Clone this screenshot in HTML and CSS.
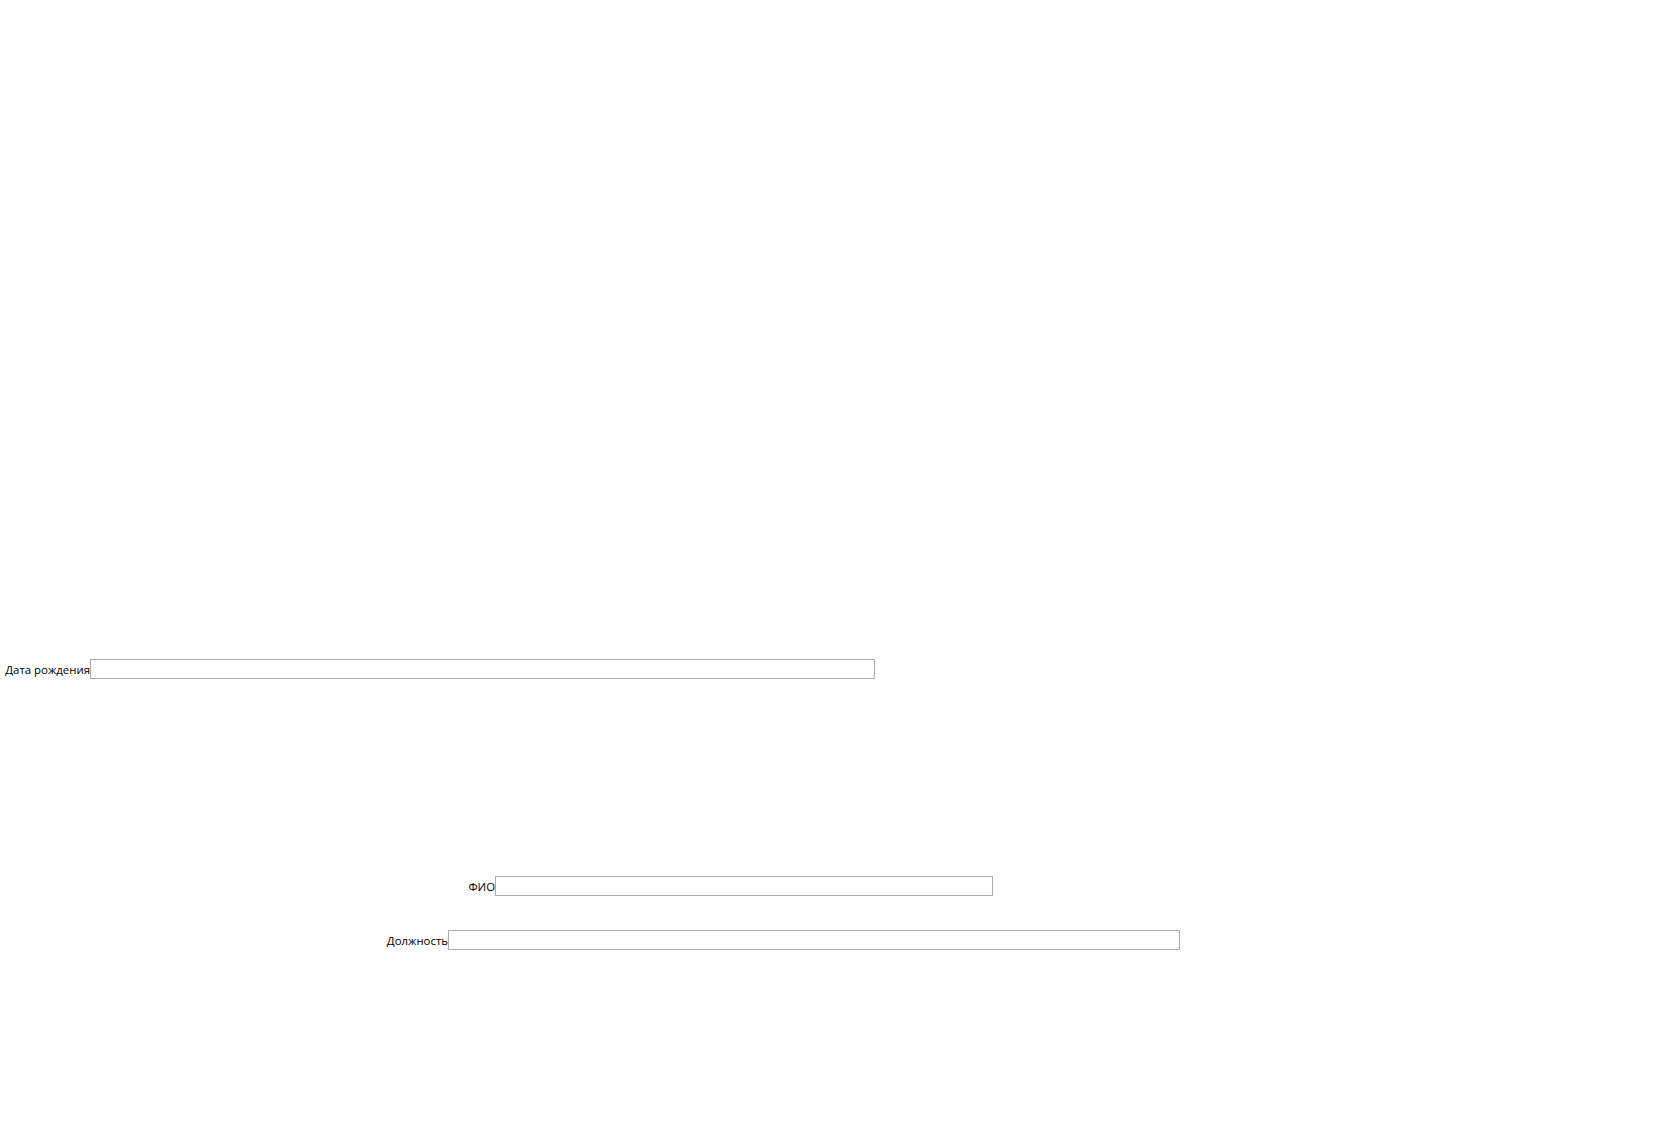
FILE: index.html
```html
<!DOCTYPE html>
<html lang="ru">
<head>
<meta charset="utf-8">
<title>Форма</title>
<link rel="stylesheet" href="styles.css">
</head>
<body>
<div class="form">
  <div class="row row-date">
    <label class="label">Дата рождения</label>
    <input class="field" type="text">
  </div>
  <div class="row row-name">
    <label class="label">ФИО</label>
    <input class="field" type="text">
  </div>
  <div class="row row-post">
    <label class="label">Должность</label>
    <input class="field" type="text">
  </div>
</div>
</body>
</html>
```
FILE: styles.css
```css
html, body {
  margin: 0;
  padding: 0;
  background: #ffffff;
}
body {
  width: 1678px;
  height: 1146px;
  overflow: hidden;
  font-family: "Open Sans", "Noto Sans", "DejaVu Sans", sans-serif;
  font-size: 11.4px;
  color: #000000;
}
.form {
  display: flex;
  flex-direction: column;
  padding-top: 659px;
}
.row {
  display: flex;
  align-items: center;
  height: 20px;
}
.label {
  text-align: right;
  white-space: nowrap;
  line-height: 20px;
  padding-top: 2px;
}
.field {
  box-sizing: border-box;
  height: 20px;
  margin: 0;
  padding: 0 2px;
  border: 1px solid #ababab;
  background: #ffffff;
  outline: none;
  font: inherit;
}
.row-date .label { width: 90px; }
.row-date .field { width: 785px; }
.row-name { margin-top: 197px; }
.row-name .label { width: 495px; }
.row-name .field { width: 498px; }
.row-post { margin-top: 34px; }
.row-post .label { width: 448px; }
.row-post .field { width: 732px; }
```
